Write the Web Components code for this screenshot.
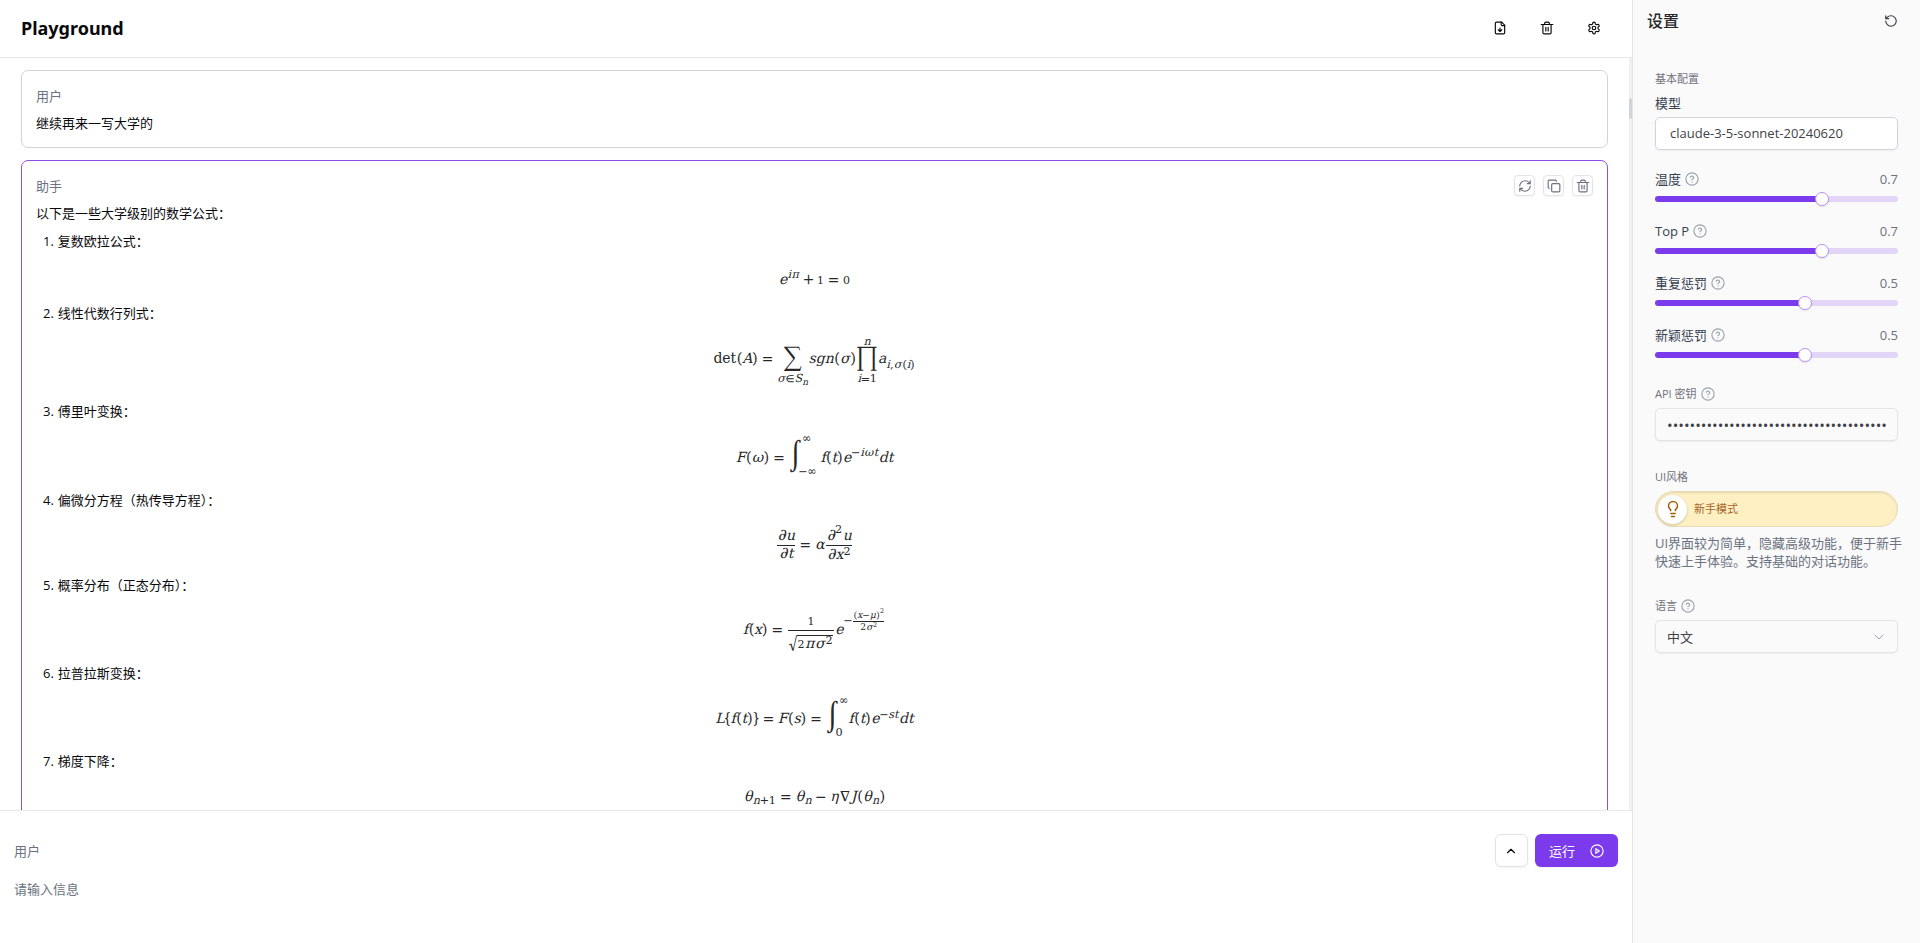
<!DOCTYPE html>
<html lang="zh-CN">
<head>
<meta charset="utf-8">
<title>Playground</title>
<style>
  html, body { margin: 0; height: 100%; }
  body { font-family: "Open Sans", "Noto Sans CJK SC", sans-serif; font-size: 13px; line-height: 20px; color: #09090b; background: #fff; }
</style>
</head>
<body>
<play-app></play-app>
<script>
const ICONS = {
  filePlus: '<path d="M15 2H6a2 2 0 0 0-2 2v16a2 2 0 0 0 2 2h12a2 2 0 0 0 2-2V7Z"/><path d="M14 2v4a2 2 0 0 0 2 2h4M12 18v-6M9 15l3 3 3-3"/>',
  trash: '<path d="M2 6h20M19 6v14a2 2 0 0 1-2 2H7a2 2 0 0 1-2-2V6M8 6V4a2 2 0 0 1 2-2h4a2 2 0 0 1 2 2v2M10 11v6M14 11v6"/>',
  gear: '<path d="M12.2 2h-.4a2 2 0 0 0-2 2v.2a2 2 0 0 1-1 1.7l-.4.3a2 2 0 0 1-2 0l-.2-.1a2 2 0 0 0-2.7.7l-.2.4a2 2 0 0 0 .7 2.7l.2.1a2 2 0 0 1 1 1.7v.5a2 2 0 0 1-1 1.8l-.2.1a2 2 0 0 0-.7 2.7l.2.4a2 2 0 0 0 2.7.7l.2-.1a2 2 0 0 1 2 0l.4.3a2 2 0 0 1 1 1.7v.2a2 2 0 0 0 2 2h.4a2 2 0 0 0 2-2v-.2a2 2 0 0 1 1-1.7l.4-.3a2 2 0 0 1 2 0l.2.1a2 2 0 0 0 2.7-.7l.2-.4a2 2 0 0 0-.7-2.7l-.2-.1a2 2 0 0 1-1-1.8v-.5a2 2 0 0 1 1-1.7l.2-.1a2 2 0 0 0 .7-2.7l-.2-.4a2 2 0 0 0-2.7-.7l-.2.1a2 2 0 0 1-2 0l-.4-.3a2 2 0 0 1-1-1.7V4a2 2 0 0 0-2-2Z"/><circle cx="12" cy="12" r="3"/>',
  refresh: '<path d="M3 12a9 9 0 0 1 9-9 9.8 9.8 0 0 1 6.7 2.7L21 8M21 3v5h-5M21 12a9 9 0 0 1-9 9 9.8 9.8 0 0 1-6.7-2.7L3 16M8 16H3v5"/>',
  copy: '<rect x="8" y="8" width="14" height="14" rx="2"/><path d="M4 16a2 2 0 0 1-2-2V4a2 2 0 0 1 2-2h10a2 2 0 0 1 2 2"/>',
  undo: '<path d="M3 12a9 9 0 1 0 9-9 9.8 9.8 0 0 0-6.7 2.7L3 8M3 3v5h5"/>',
  help: '<circle cx="12" cy="12" r="10.5"/><path d="M9 9a3 3 0 0 1 5.8 1c0 2-3 3-3 3M12 17h.01"/>',
  bulb: '<path d="M15 14c.2-1 .7-1.7 1.5-2.5A4.7 4.7 0 0 0 18 8 6 6 0 0 0 6 8c0 1 .2 2.2 1.5 3.5.7.7 1.3 1.5 1.5 2.5M9 18h6M10 22h4"/>',
  up: '<path d="m6 15 6-6 6 6"/>',
  down: '<path d="m4 8 8 8 8-8"/>',
  play: '<circle cx="12" cy="12" r="10.5"/><path d="m10 8 6 4-6 4Z"/>'
};

function define(name, html, setup) {
  const template = document.createElement('template');
  template.innerHTML = html;
  customElements.define(name, class extends HTMLElement {
    connectedCallback() {
      if (this.shadowRoot) return;
      this.attachShadow({ mode: 'open' }).append(template.content.cloneNode(true));
      if (setup) setup(this, this.shadowRoot);
    }
  });
}

define('ui-icon', `
  <style>
    :host { display: inline-flex; flex: none; width: var(--size, 14px); height: var(--size, 14px); }
    svg { width: 100%; height: 100%; fill: none; stroke: currentColor; stroke-width: 2; stroke-linecap: round; stroke-linejoin: round; }
  </style>
  <svg viewBox="0 0 24 24" aria-hidden="true"></svg>`,
  (el, root) => { root.querySelector('svg').innerHTML = ICONS[el.getAttribute('name')]; });

define('icon-button', `
  <style>
    :host { display: inline-flex; }
    button { display: flex; align-items: center; justify-content: center; box-sizing: border-box; width: 32px; height: 32px; padding: 0; border: 0; background: none; color: inherit; border-radius: 6px; }
    :host([kind="small"]) button { width: 21px; height: 21px; border: 1px solid #e4e4e7; border-radius: 4px; background: #fff; color: #6b7280; box-shadow: 0 1px 2px #0000000d; }
    :host([kind="outline"]) button { width: 33px; height: 33px; border: 1px solid #e4e4e7; background: #fff; box-shadow: 0 1px 2px #0000000d; }
  </style>
  <button type="button"><slot></slot></button>`,
  (el, root) => { root.querySelector('button').setAttribute('aria-label', el.getAttribute('label')); });

define('play-header', `
  <style>
    :host { display: flex; align-items: center; justify-content: space-between; box-sizing: border-box; height: 58px; padding: 0 22px 1px 21px; border-bottom: 1px solid #e5e7eb; flex: none; }
    h1 { margin: 0; font-size: 18px; line-height: 24px; font-weight: 700; font-family: "Noto Sans", sans-serif; }
    nav { display: flex; gap: 15px; }
  </style>
  <h1>Playground</h1>
  <nav>
    <icon-button label="导出"><ui-icon name="filePlus"></ui-icon></icon-button>
    <icon-button label="清空"><ui-icon name="trash"></ui-icon></icon-button>
    <icon-button label="设置"><ui-icon name="gear"></ui-icon></icon-button>
  </nav>`);

define('chat-message', `
  <style>
    :host { display: block; border: 1px solid #d4d4d8; border-radius: 7px; padding: 14px 14px 13px; background: #fff; }
    :host([active]) { border-color: #8b4fe8; }
    header { display: flex; align-items: center; justify-content: space-between; height: 21px; margin-bottom: 6px; color: #6b7280; }
    .tools { display: flex; gap: 8px; }
    .body { line-height: 22px; }
  </style>
  <header><span class="role"></span><div class="tools"><slot name="tools"></slot></div></header>
  <div class="body"><slot></slot></div>`,
  (el, root) => { root.querySelector('.role').textContent = el.getAttribute('role-name'); });

define('formula-item', `
  <style>
    :host { display: block; }
    .title { display: flex; line-height: 20px; gap: 4px; padding-left: 7px; }
    .eq { display: flex; align-items: center; justify-content: center; min-height: var(--row, 68px); }
  </style>
  <div class="title"><span class="no"></span><slot name="title"></slot></div>
  <div class="eq"><slot></slot></div>`,
  (el, root) => { root.querySelector('.no').textContent = el.getAttribute('no') + '.'; });

define('chat-log', `
  <style>
    :host { display: block; position: relative; flex: 1 1 0; min-height: 0; overflow: hidden; padding: 12px 24px 0 21px; }
    .stack { display: flex; flex-direction: column; gap: 12px; }
    .bar { position: absolute; top: 0; right: 0; bottom: 0; width: 3px; background: #f1f1f4; }
    .bar::after { content: ""; position: absolute; top: 40px; left: 0; width: 3px; height: 21px; border-radius: 2px; background: #d1d5db; }
    .list { margin-top: 7px; }
    math { font-family: "DejaVu Math TeX Gyre", "Liberation Serif", serif; font-size: 14px; line-height: 16px; color: #27272a; }
    mi { text-transform: none; font-style: italic; }
    mi.up { font-style: normal; }
    mn.low { font-size: 11px; }
    mo.op { font-size: 16px; }
    mo.int { font-size: 22px; }
  </style>
  <div class="stack">
    <chat-message role-name="用户">继续再来一写大学的</chat-message>
    <chat-message role-name="助手" active>
      <icon-button slot="tools" kind="small" label="重新生成"><ui-icon name="refresh"></ui-icon></icon-button>
      <icon-button slot="tools" kind="small" label="复制"><ui-icon name="copy"></ui-icon></icon-button>
      <icon-button slot="tools" kind="small" label="删除"><ui-icon name="trash"></ui-icon></icon-button>
      <div>以下是一些大学级别的数学公式：</div>
      <div class="list">
        <formula-item no="1" style="--row:52px"><span slot="title">复数欧拉公式：</span>
          <math display="block"><msup><mi>e</mi><mrow><mi>i</mi><mi>π</mi></mrow></msup><mo>+</mo><mn class="low">1</mn><mo>=</mo><mn class="low">0</mn></math></formula-item>
        <formula-item no="2" style="--row:78px"><span slot="title">线性代数行列式：</span>
          <math display="block"><mi class="up">det</mi><mo stretchy="false">(</mo><mi>A</mi><mo stretchy="false">)</mo><mo>=</mo><munder><mo class="op">∑</mo><mrow><mi>σ</mi><mo>∈</mo><msub><mi>S</mi><mi>n</mi></msub></mrow></munder><mi>s</mi><mi>g</mi><mi>n</mi><mo stretchy="false">(</mo><mi>σ</mi><mo stretchy="false">)</mo><munderover><mo class="op">∏</mo><mrow><mi>i</mi><mo>=</mo><mn>1</mn></mrow><mi>n</mi></munderover><msub><mi>a</mi><mrow><mi>i</mi><mo>,</mo><mi>σ</mi><mo stretchy="false">(</mo><mi>i</mi><mo stretchy="false">)</mo></mrow></msub></math></formula-item>
        <formula-item no="3" style="--row:69px"><span slot="title">傅里叶变换：</span>
          <math display="block"><mi>F</mi><mo stretchy="false">(</mo><mi>ω</mi><mo stretchy="false">)</mo><mo>=</mo><msubsup><mo class="int">∫</mo><mrow><mo>−</mo><mn>∞</mn></mrow><mn>∞</mn></msubsup><mi>f</mi><mo stretchy="false">(</mo><mi>t</mi><mo stretchy="false">)</mo><msup><mi>e</mi><mrow><mo>−</mo><mi>i</mi><mi>ω</mi><mi>t</mi></mrow></msup><mi>d</mi><mi>t</mi></math></formula-item>
        <formula-item no="4" style="--row:65px"><span slot="title">偏微分方程（热传导方程）：</span>
          <math display="block"><mfrac><mrow><mi>∂</mi><mi>u</mi></mrow><mrow><mi>∂</mi><mi>t</mi></mrow></mfrac><mo>=</mo><mi>α</mi><mfrac><mrow><msup><mi>∂</mi><mn>2</mn></msup><mi>u</mi></mrow><mrow><mi>∂</mi><msup><mi>x</mi><mn>2</mn></msup></mrow></mfrac></math></formula-item>
        <formula-item no="5" style="--row:68px"><span slot="title">概率分布（正态分布）：</span>
          <math display="block"><mi>f</mi><mo stretchy="false">(</mo><mi>x</mi><mo stretchy="false">)</mo><mo>=</mo><mfrac><mn class="low">1</mn><msqrt><mn class="low">2</mn><mi>π</mi><msup><mi>σ</mi><mn>2</mn></msup></msqrt></mfrac><msup><mi>e</mi><mrow><mo>−</mo><mfrac><msup><mrow><mo stretchy="false">(</mo><mi>x</mi><mo>−</mo><mi>μ</mi><mo stretchy="false">)</mo></mrow><mn>2</mn></msup><mrow><mn>2</mn><msup><mi>σ</mi><mn>2</mn></msup></mrow></mfrac></mrow></msup></math></formula-item>
        <formula-item no="6" style="--row:68px"><span slot="title">拉普拉斯变换：</span>
          <math display="block"><mi>L</mi><mo stretchy="false">{</mo><mi>f</mi><mo stretchy="false">(</mo><mi>t</mi><mo stretchy="false">)</mo><mo stretchy="false">}</mo><mo>=</mo><mi>F</mi><mo stretchy="false">(</mo><mi>s</mi><mo stretchy="false">)</mo><mo>=</mo><msubsup><mo class="int">∫</mo><mn>0</mn><mn>∞</mn></msubsup><mi>f</mi><mo stretchy="false">(</mo><mi>t</mi><mo stretchy="false">)</mo><msup><mi>e</mi><mrow><mo>−</mo><mi>s</mi><mi>t</mi></mrow></msup><mi>d</mi><mi>t</mi></math></formula-item>
        <formula-item no="7" style="--row:52px"><span slot="title">梯度下降：</span>
          <math display="block"><msub><mi>θ</mi><mrow><mi>n</mi><mo>+</mo><mn>1</mn></mrow></msub><mo>=</mo><msub><mi>θ</mi><mi>n</mi></msub><mo>−</mo><mi>η</mi><mi class="up">∇</mi><mi>J</mi><mo stretchy="false">(</mo><msub><mi>θ</mi><mi>n</mi></msub><mo stretchy="false">)</mo></math></formula-item>
      </div>
    </chat-message>
  </div>
  <div class="bar"></div>`,
  (el, root) => {
    // Large operators, and operators inside scripts and limits, are set tight.
    root.querySelectorAll('mo.op, mo.int, :is(msub, msup, munder, munderover, msubsup) mrow > mo').forEach(mo => {
      mo.setAttribute('lspace', '0');
      mo.setAttribute('rspace', '0');
    });
  });

define('chat-composer', `
  <style>
    :host { display: block; flex: none; border-top: 1px solid #e5e7eb; padding: 23px 14px 12px; background: #fff; color: #6b7280; }
    .row { display: flex; align-items: center; justify-content: space-between; }
    .actions { display: flex; gap: 7px; color: #09090b; }
    .run { display: flex; align-items: center; gap: 15px; height: 33px; padding: 0 14px; border: 0; border-radius: 6px; background: #7c3aed; color: #fff; font: inherit; box-shadow: 0 1px 2px #0000000d; }
    textarea { display: block; box-sizing: border-box; width: 100%; height: 53px; margin-top: 11px; padding: 0; border: 0; outline: 0; resize: none; background: none; font: inherit; line-height: 22px; color: #09090b; }
    textarea::placeholder { color: #6b7280; }
  </style>
  <div class="row">
    <label for="msg">用户</label>
    <div class="actions">
      <icon-button kind="outline" label="展开"><ui-icon name="up"></ui-icon></icon-button>
      <button class="run" type="button">运行<ui-icon name="play"></ui-icon></button>
    </div>
  </div>
  <textarea id="msg" placeholder="请输入信息"></textarea>`);

define('param-slider', `
  <style>
    :host { display: block; }
    .row { display: flex; align-items: center; height: 20px; gap: 4px; }
    output { margin-left: auto; color: #6b7280; }
    ui-icon { color: #9ca3af; }
    input { display: block; appearance: none; width: 100%; height: 14px; margin: 3px 0 0; background: none; }
    input::-webkit-slider-runnable-track { height: 6px; border-radius: 3px; background: linear-gradient(to right, #7c3aed var(--fill), #e2d5f8 var(--fill)); }
    input::-webkit-slider-thumb { appearance: none; box-sizing: border-box; width: 14px; height: 14px; margin-top: -4px; border-radius: 50%; border: 1px solid #b794f4; background: #fff; box-shadow: 0 1px 2px #0000001a; }
  </style>
  <div class="row"><label for="r"></label><ui-icon name="help"></ui-icon><output for="r"></output></div>
  <input id="r" type="range" step="0.1">`,
  (el, root) => {
    const input = root.querySelector('input');
    input.min = el.getAttribute('min');
    input.max = el.getAttribute('max');
    input.value = el.getAttribute('value');
    root.querySelector('label').textContent = el.getAttribute('label');
    const paint = () => {
      root.querySelector('output').textContent = input.value;
      input.style.setProperty('--fill', (input.value - input.min) / (input.max - input.min) * 100 + '%');
    };
    input.addEventListener('input', paint);
    paint();
  });

define('mode-switch', `
  <style>
    :host { display: block; }
    button { display: flex; align-items: center; gap: 7px; box-sizing: border-box; width: 100%; height: 36px; padding: 0 2px; border: 1px solid #e7dcb6; border-radius: 18px; background: #fef0c3; color: #a8652a; font: inherit; font-size: 11px; box-shadow: inset 0 1px 2px #0000001a; }
    .knob { display: flex; align-items: center; justify-content: center; width: 29px; height: 29px; border-radius: 50%; background: #fff; color: #a16207; box-shadow: 0 1px 3px #00000033; }
    ui-icon { --size: 18px; }
  </style>
  <button type="button" role="switch" aria-checked="false"><span class="knob"><ui-icon name="bulb"></ui-icon></span><span>新手模式</span></button>`);

define('settings-panel', `
  <style>
    :host { display: block; box-sizing: border-box; flex: none; width: 288px; border-left: 1px solid #e5e7eb; background: #fafafa; color: #3f3f46; overflow: hidden; }
    header { display: flex; align-items: center; justify-content: space-between; height: 42px; padding: 0 13px 0 14px; }
    h2 { margin: 0; font-size: 16px; line-height: 24px; font-weight: 500; color: #27272a; }
    form { padding: 28px 22px; color: #374151; }
    .cap { display: flex; align-items: center; gap: 4px; height: 18px; font-size: 11px; color: #71717a; }
    .name { display: block; line-height: 22px; margin-top: 4px; }
    input, select { display: block; box-sizing: border-box; width: 100%; height: 33px; margin: 0; border: 1px solid #e4e4e7; border-radius: 5px; background: #fafafa; color: #3f3f46; font: inherit; outline: 0; box-shadow: 0 1px 2px #0000000d; }
    .model { padding: 0 14px 2px; margin-top: 3px; border-color: #d1d5db; background: #fff; }
    .params { display: grid; gap: 15px; margin: 19px 0 23px; }
    .key { padding: 0 11px; margin-top: 5px; font-size: 15px; }
    .section { margin-top: 27px; }
    mode-switch { margin-top: 5px; }
    p { margin: 7px -6px 0 0; line-height: 18px; color: #6b7280; }
    .pick { position: relative; margin-top: 5px; }
    select { appearance: none; padding: 0 11px; }
    .pick ui-icon { position: absolute; right: 13px; top: 11px; --size: 12px; color: #9ca3af; pointer-events: none; }
    .cap ui-icon { color: #9ca3af; }
  </style>
  <header><h2>设置</h2><icon-button label="重置"><ui-icon name="undo"></ui-icon></icon-button></header>
  <form>
    <div class="cap">基本配置</div>
    <label class="name" for="model">模型</label>
    <input class="model" id="model" type="text" value="claude-3-5-sonnet-20240620">
    <div class="params">
      <param-slider label="温度" min="0" max="1" value="0.7"></param-slider>
      <param-slider label="Top P" min="0" max="1" value="0.7"></param-slider>
      <param-slider label="重复惩罚" min="-2" max="2" value="0.5"></param-slider>
      <param-slider label="新颖惩罚" min="-2" max="2" value="0.5"></param-slider>
    </div>
    <div class="cap"><label for="key">API 密钥</label><ui-icon name="help"></ui-icon></div>
    <input class="key" id="key" type="password" autocomplete="off" value="012345678901234567890123456789012345678">
    <div class="cap section">UI风格</div>
    <mode-switch></mode-switch>
    <p>UI界面较为简单，隐藏高级功能，便于新手快速上手体验。支持基础的对话功能。</p>
    <div class="cap section"><label for="lang">语言</label><ui-icon name="help"></ui-icon></div>
    <div class="pick"><select id="lang"><option>中文</option><option>English</option></select><ui-icon name="down"></ui-icon></div>
  </form>`);

define('play-app', `
  <style>
    :host { display: flex; height: 100vh; }
    main { display: flex; flex-direction: column; flex: 1; min-width: 0; }
  </style>
  <main>
    <play-header></play-header>
    <chat-log></chat-log>
    <chat-composer></chat-composer>
  </main>
  <settings-panel></settings-panel>`);
</script>
</body>
</html>
